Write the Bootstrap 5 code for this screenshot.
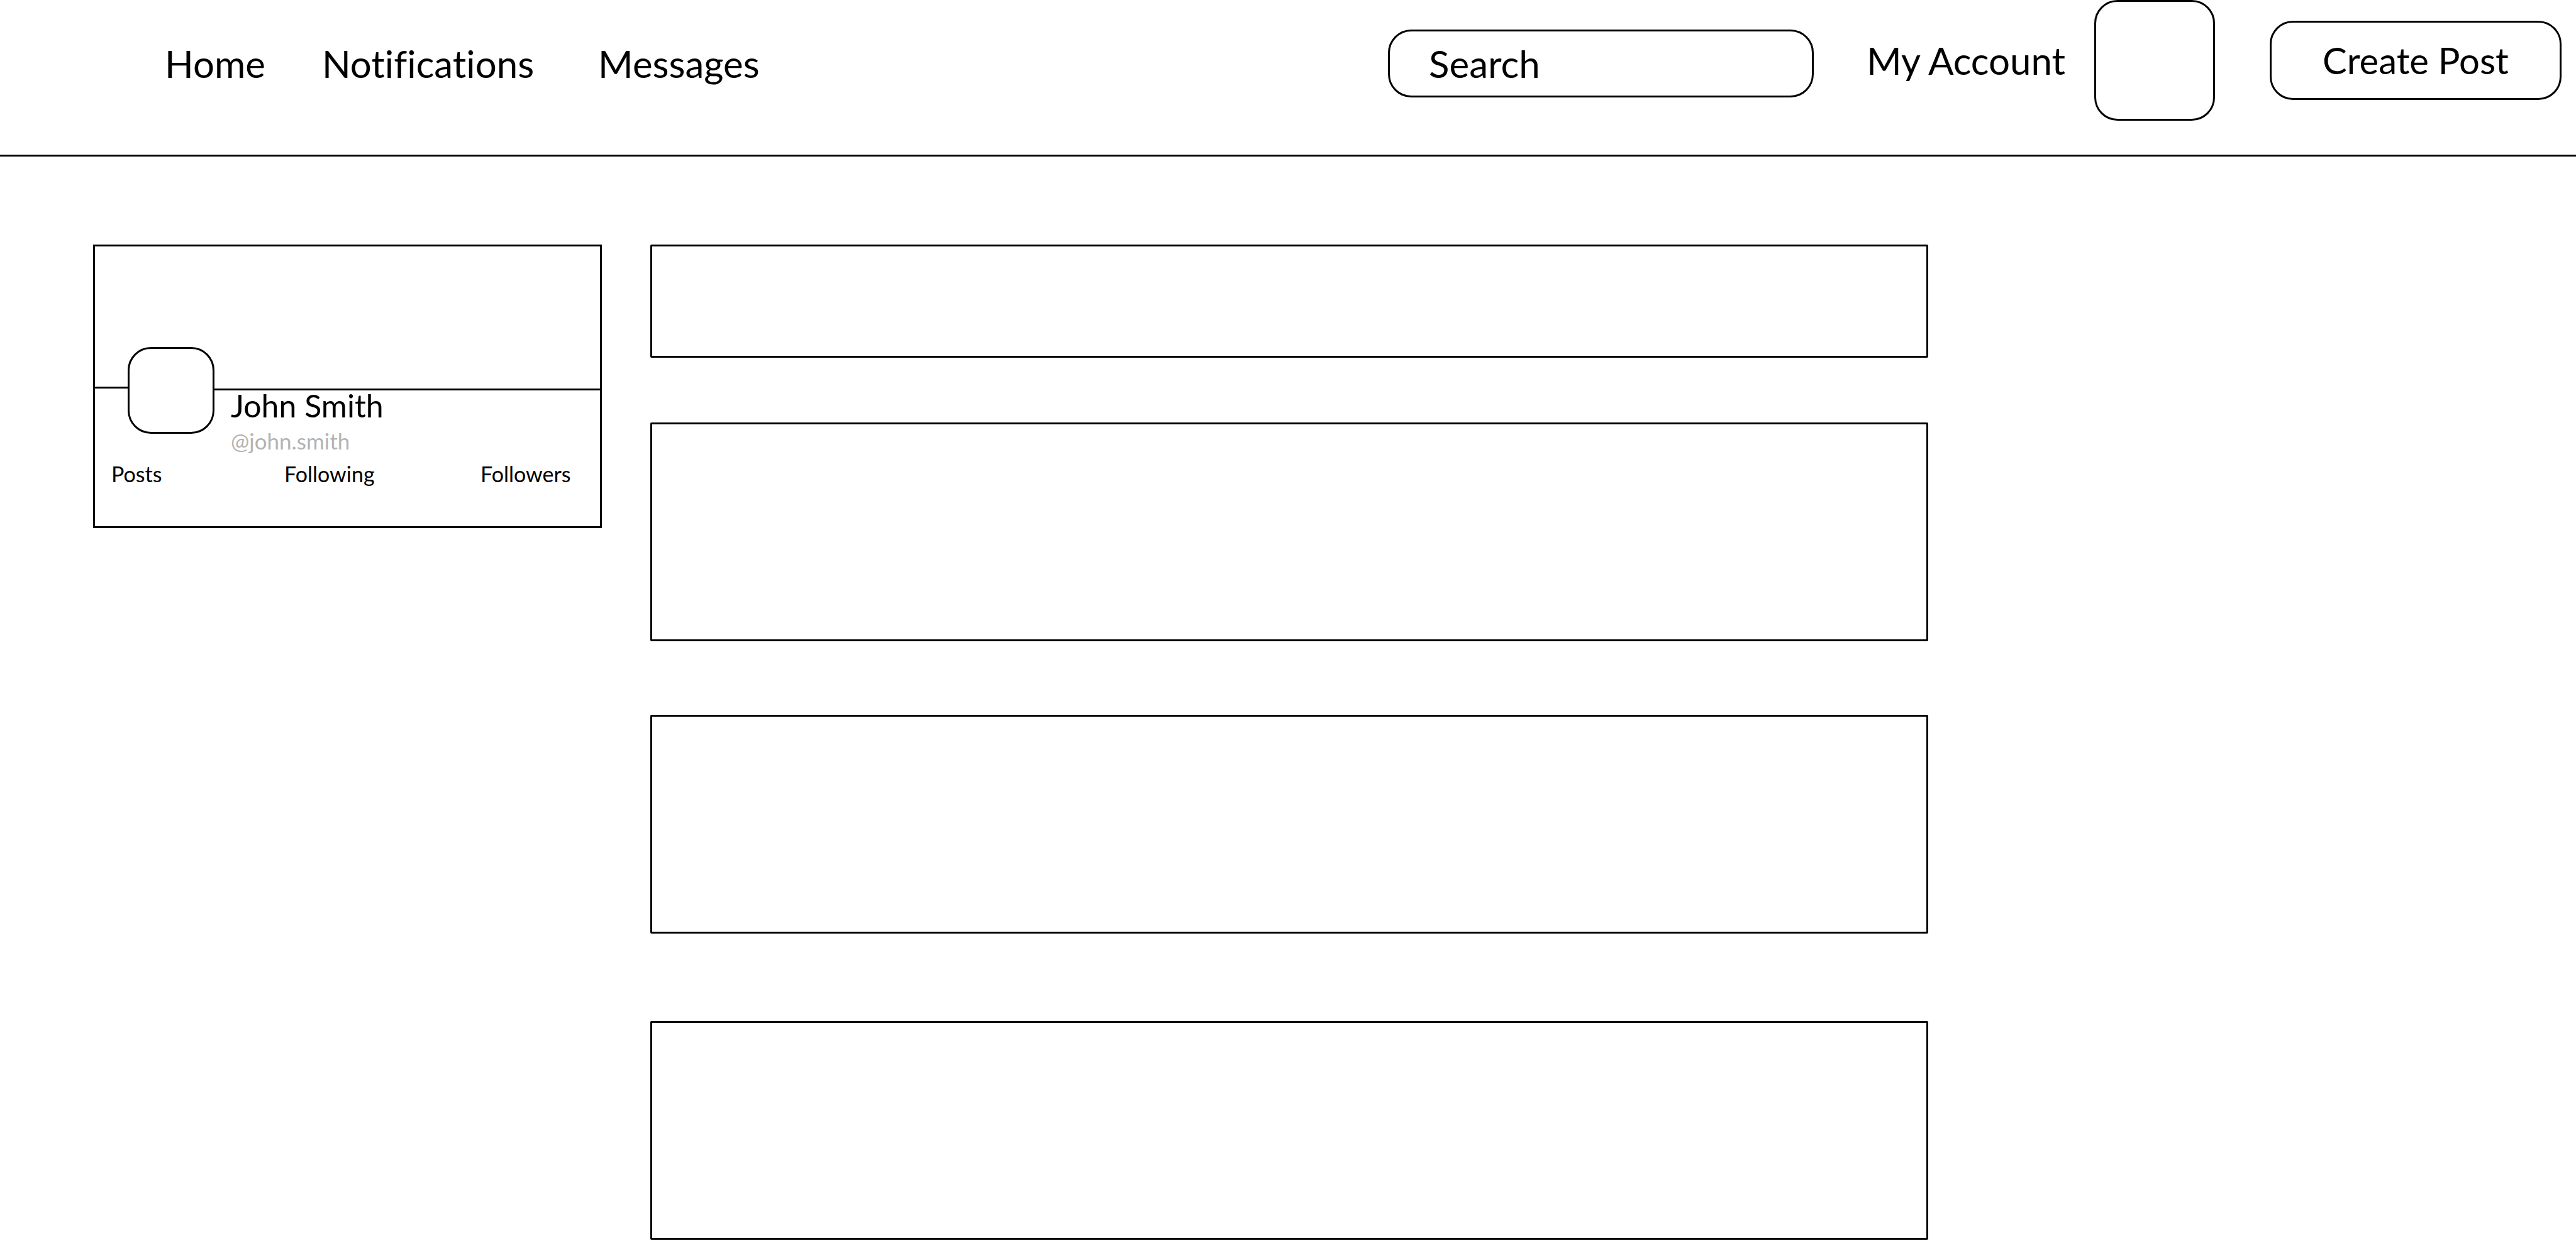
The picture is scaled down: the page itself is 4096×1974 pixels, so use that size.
<!DOCTYPE html>
<html lang="en">
<head>
<meta charset="utf-8">
<meta name="viewport" content="width=device-width, initial-scale=1">
<title>Home</title>
<link href="https://cdn.jsdelivr.net/npm/bootstrap@5.3.0/dist/css/bootstrap.min.css" rel="stylesheet">
<style>
  body { font-family: Lato, "Open Sans", sans-serif; font-variant-ligatures: none; color: #000; background: #fff; }
  a { color: inherit; text-decoration: none; }
  .line { border: 3px solid #000; }
  .soft { border-radius: 37px; }

  .topbar { padding: 0 23px 54px 262px; border-bottom: 3px solid #000; font-size: 60px; line-height: 72px; }
  .lowered { margin-top: 10px; }
  .main-nav { column-gap: 90px; }
  .main-nav li:last-child { margin-left: 12px; }
  .search-box { width: 677px; height: 108px; padding: 0 62px; margin-right: 84px; background: #fff; color: #000; }
  .search-box::placeholder { color: #000; opacity: 1; }
  .account { gap: 46px; margin-right: 87px; }
  .avatar-lg { width: 192px; height: 192px; }
  .create { width: 464px; height: 126px; background: #fff; font-size: 58px; color: #000; }

  .page { display: grid; grid-template-columns: 809fr 2032fr 953fr; column-gap: 77px; padding: 140px 0 0 148px; align-items: start; }
  .cover { height: 223px; }
  .stub { width: 52px; border-top: 3px solid #000; }
  .avatar-sm { width: 138px; height: 138px; margin: -63px 0 -75px; background: #fff; }
  .who { margin-top: 3px; border-top: 3px solid #000; padding-left: 26px; }
  .full-name { font-size: 50px; line-height: 48px; }
  .handle { font-size: 35px; line-height: 64px; color: #b3b3b3; }
  .stats { display: grid; grid-template-columns: 275fr 312fr 190fr; padding: 0 0 62px 26px; font-size: 34px; line-height: 42px; }

  .composer { height: 180px; margin-bottom: 103px; border-radius: 2px; }
  .entry { height: 348px; border-radius: 2px; }
  .entry + .entry { margin-top: 117px; }
  .entry + .entry:last-child { margin-top: 139px; }
</style>
</head>
<body>
<header class="topbar d-flex align-items-center justify-content-between">
  <nav class="lowered" aria-label="Main">
    <ul class="main-nav list-unstyled d-flex mb-0">
      <li><a href="#">Home</a></li>
      <li><a href="#">Notifications</a></li>
      <li><a href="#">Messages</a></li>
    </ul>
  </nav>
  <div class="d-flex align-items-center">
    <input class="search-box line soft lowered" type="search" placeholder="Search" aria-label="Search">
    <a class="account d-flex align-items-center" href="#">My Account <span class="avatar-lg line soft"></span></a>
    <button class="create line soft p-0" type="button">Create Post</button>
  </div>
</header>

<main class="page">
  <section class="line" aria-label="Profile">
    <div class="cover"></div>
    <div class="d-flex align-items-start">
      <div class="stub"></div>
      <div class="avatar-sm line soft flex-shrink-0"></div>
      <div class="who flex-grow-1">
        <div class="full-name">John Smith</div>
        <div class="handle">@john.smith</div>
      </div>
    </div>
    <div class="stats">
      <a href="#">Posts</a>
      <a href="#">Following</a>
      <a href="#">Followers</a>
    </div>
  </section>
  <section aria-label="Feed">
    <div class="composer line"></div>
    <article class="entry line"></article>
    <article class="entry line"></article>
    <article class="entry line"></article>
  </section>
</main>
<script src="https://cdn.jsdelivr.net/npm/bootstrap@5.3.0/dist/js/bootstrap.bundle.min.js"></script>
</body>
</html>
